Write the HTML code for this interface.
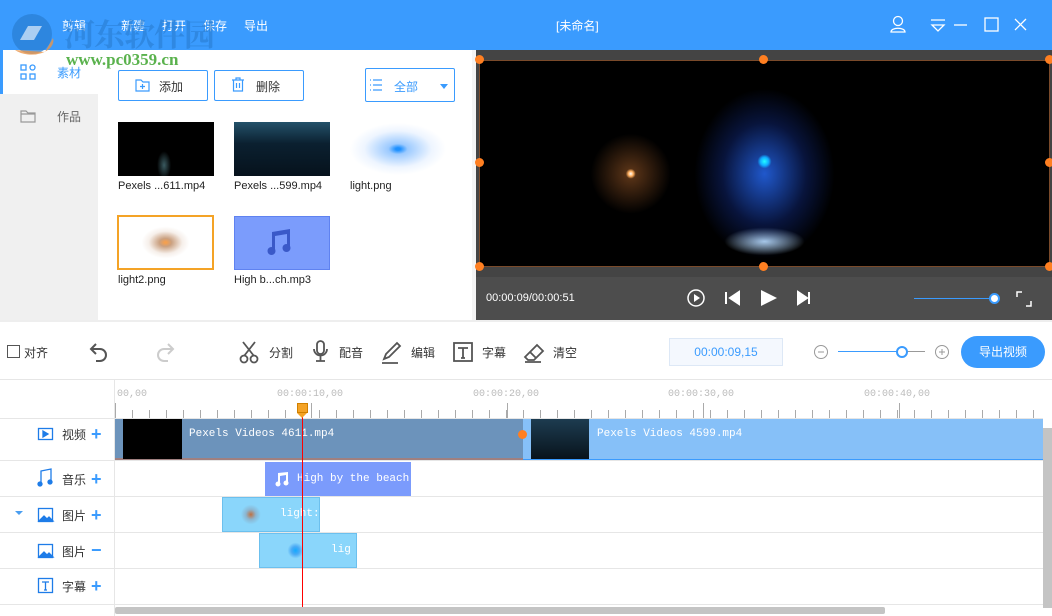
<!DOCTYPE html>
<html><head><meta charset="utf-8"><style>
*{margin:0;padding:0;box-sizing:border-box}
body{width:1052px;height:616px;overflow:hidden;background:#fff;font-family:"Liberation Sans","Noto Sans CJK SC",sans-serif;font-size:12px;color:#333;position:relative}
.a{position:absolute}
.tb{left:0;top:0;width:1052px;height:50px;background:#3a9bfe}
.wt{color:#fff;font-size:12px;top:17px}
.btn{border:1px solid #3a9bfe;border-radius:2px;height:31px;background:#fff;color:#333;font-size:12px}
.th{font-size:11px;color:#222}
.tl{font-size:12px;color:#333}
.plus{color:#3a9bfe;font-size:18px;font-weight:bold}
.mono{font-family:"Liberation Mono","Noto Sans CJK SC",monospace;color:#fff;font-size:11px}
.dot{width:9px;height:9px;border-radius:50%;background:#ff7f21}
</style></head><body>
<div class="a tb"></div>
<div class="a wt" style="left:62px">剪辑</div>
<div class="a wt" style="left:121px">新建</div>
<div class="a wt" style="left:162px">打开</div>
<div class="a wt" style="left:203px">保存</div>
<div class="a wt" style="left:244px">导出</div>
<div class="a wt" style="left:556px">[未命名]</div>
<svg class="a" style="left:885px;top:14px" width="150" height="22" fill="none" stroke="#fff" stroke-width="1.3">
<circle cx="13" cy="7" r="4.5"/><path d="M6 18c0-5 14-5 14 0z"/>
<path d="M46 6h14M47 11h12l-6 6z"/>
<path d="M69 11h13"/><rect x="100" y="4" width="13" height="13"/><path d="M130 5l11 11M141 5l-11 11"/>
</svg>
<!-- sidebar -->
<div class="a" style="left:0;top:50px;width:98px;height:270px;background:#f0f0f0"></div>
<div class="a" style="left:0;top:50px;width:98px;height:44px;background:#fff"></div>
<div class="a" style="left:0;top:50px;width:3px;height:44px;background:#3a9bfe"></div>
<svg class="a" style="left:20px;top:64px" width="16" height="16" fill="none" stroke="#3a9bfe" stroke-width="1.3"><rect x="1" y="1" width="5" height="5"/><rect x="10" y="1" width="5" height="5" rx="2.5"/><rect x="1" y="10" width="5" height="5"/><rect x="10" y="10" width="5" height="5"/></svg>
<div class="a" style="left:57px;top:64px;color:#3a9bfe">素材</div>
<svg class="a" style="left:20px;top:109px" width="16" height="14" fill="none" stroke="#999" stroke-width="1.2"><path d="M1 2h5l2 2h7v9H1z M1 5h14"/></svg>
<div class="a" style="left:57px;top:108px;color:#666">作品</div>
<!-- media -->
<div class="a btn" style="left:118px;top:70px;width:90px"></div>
<svg class="a" style="left:135px;top:78px" width="15" height="14" fill="none" stroke="#3a9bfe" stroke-width="1.2"><path d="M1 2h5l2 2h6v9H1z M7.5 6v5M5 8.5h5"/></svg>
<div class="a" style="left:159px;top:78px">添加</div>
<div class="a btn" style="left:214px;top:70px;width:90px"></div>
<svg class="a" style="left:231px;top:77px" width="14" height="15" fill="none" stroke="#3a9bfe" stroke-width="1.2"><path d="M1 3h12M5 3V1h4v2M2.5 3v11h9V3M5.5 6v5M8.5 6v5"/></svg>
<div class="a" style="left:256px;top:78px">删除</div>
<div class="a btn" style="left:365px;top:68px;width:90px;height:34px"></div>
<svg class="a" style="left:369px;top:79px" width="14" height="12" stroke="#3a9bfe" stroke-width="1.2"><path d="M1 1h1M4 1h9M1 6h1M4 6h9M1 11h1M4 11h9"/></svg>
<div class="a" style="left:394px;top:78px;color:#3a9bfe">全部</div>
<div class="a" style="left:440px;top:84px;border:4px solid transparent;border-top:5px solid #3a9bfe"></div>
<div class="a" style="left:118px;top:122px;width:96px;height:54px;background:radial-gradient(ellipse 10px 20px at 48% 80%,#3a5a60,#000 70%)"></div>
<div class="a" style="left:234px;top:122px;width:96px;height:54px;background:linear-gradient(#24526a,#0b2030 40%,#06121c)"></div>
<div class="a" style="left:350px;top:122px;width:96px;height:54px;background:radial-gradient(ellipse 48px 26px at 50% 50%,#1e90ff 5%,#9ccaff 20%,#eef5ff 70%,#fff)"></div>
<div class="a th" style="left:118px;top:180px">Pexels ...611.mp4</div>
<div class="a th" style="left:234px;top:180px">Pexels ...599.mp4</div>
<div class="a th" style="left:350px;top:180px">light.png</div>
<div class="a" style="left:117px;top:215px;width:97px;height:55px;border:2px solid #f4a326;background:radial-gradient(ellipse 24px 16px at 50% 50%,#f4a050 5%,#caa080 25%,#f6efea 70%,#fff)"></div>
<div class="a" style="left:234px;top:216px;width:96px;height:54px;background:#7b9cfc;border:1px solid #5f82f0"></div>
<svg class="a" style="left:264px;top:226px" width="34" height="32" fill="#3a59c8"><path d="M8 6l18-3v19h-3V8L11 10v15h-3z"/><circle cx="7.5" cy="25" r="4"/><circle cx="22.5" cy="22" r="4"/></svg>
<div class="a th" style="left:118px;top:274px">light2.png</div>
<div class="a th" style="left:234px;top:274px">High b...ch.mp3</div>
<div class="a" style="left:472px;top:50px;width:4px;height:270px;background:#f4f4f4"></div>
<!-- preview -->
<div class="a" style="left:476px;top:50px;width:576px;height:270px;background:#444"></div>
<div class="a" style="left:479px;top:60px;width:571px;height:207px;background:radial-gradient(circle 5px at 26.5% 55%,#fff,#ffb060 50%,transparent),radial-gradient(circle 40px at 26.5% 55%,rgba(190,110,50,.5),transparent),radial-gradient(circle 7px at 50% 49%,#2ff,#1af 60%,transparent),radial-gradient(ellipse 70px 85px at 50% 55%,rgba(40,110,255,.8),rgba(20,50,150,.4) 60%,transparent),radial-gradient(ellipse 40px 14px at 50% 88%,#cef,transparent);background-color:#000;border:1px solid #7a4a2a"></div>
<div class="a dot" style="left:475px;top:55px"></div><div class="a dot" style="left:759px;top:55px"></div><div class="a dot" style="left:1045px;top:55px"></div>
<div class="a dot" style="left:475px;top:158px"></div><div class="a dot" style="left:1045px;top:158px"></div>
<div class="a dot" style="left:475px;top:262px"></div><div class="a dot" style="left:759px;top:262px"></div><div class="a dot" style="left:1045px;top:262px"></div>
<div class="a" style="left:476px;top:277px;width:576px;height:43px;background:#4d4d4d"></div>
<div class="a" style="left:486px;top:292px;color:#fff;font-size:11px">00:00:09/00:00:51</div>
<svg class="a" style="left:684px;top:287px" width="140" height="22" fill="#fff" stroke="#fff">
<circle cx="12" cy="11" r="8" fill="none" stroke-width="1.5"/><path d="M10 7l6 4-6 4z" stroke="none"/>
<path d="M42 5v12M55 5l-9 6 9 6z" stroke-width="2"/>
<path d="M77 3l16 8-16 8z" stroke="none"/>
<path d="M114 5l9 6-9 6zM125 5v12" stroke-width="2"/>
</svg>
<div class="a" style="left:914px;top:298px;width:80px;height:1px;background:#3a9bfe"></div>
<div class="a" style="left:989px;top:293px;width:11px;height:11px;border-radius:50%;background:#fff;border:2px solid #3a9bfe"></div>
<svg class="a" style="left:1016px;top:291px" width="16" height="16" fill="none" stroke="#fff" stroke-width="1.5"><path d="M1 6V1h5M15 10v5h-5"/></svg>
<!-- toolbar -->
<div class="a" style="left:0;top:320px;width:1052px;height:60px;background:#fff;border-top:2px solid #eee;border-bottom:1px solid #e6e6e6"></div>
<div class="a" style="left:7px;top:345px;width:13px;height:13px;border:1px solid #555"></div>
<div class="a tl" style="left:24px;top:344px">对齐</div>
<svg class="a" style="left:88px;top:340px" width="90" height="24" fill="none" stroke-width="2"><path d="M8 4L3 9l5 5M3 9h9a6 6 0 0 1 0 12H8" stroke="#555"/><path d="M80 4l5 5-5 5M85 9h-9a6 6 0 0 0 0 12h4" stroke="#ccc"/></svg>
<svg class="a" style="left:238px;top:340px" width="330" height="24" fill="none" stroke="#555" stroke-width="1.8">
<path d="M5 2l11 14M17 2L6 16"/><circle cx="6" cy="19" r="3.5"/><circle cx="16" cy="19" r="3.5"/>
<rect x="79" y="1" width="7" height="13" rx="3.5"/><path d="M76 9a6.5 6.5 0 0 0 13 0M82.5 16v5M78 21h9"/>
<path d="M146 19l2-5 11-11 3 3-11 11z M144 23h16"/>
<rect x="216" y="3" width="18" height="18"/><path d="M220 8h10M225 8v10M223 18h4"/>
<path d="M287 17l12-12 6 6-9 9h-6zM292 12l6 6M287 22h16"/>
</svg>
<div class="a tl" style="left:269px;top:344px">分割</div>
<div class="a tl" style="left:339px;top:344px">配音</div>
<div class="a tl" style="left:411px;top:344px">编辑</div>
<div class="a tl" style="left:482px;top:344px">字幕</div>
<div class="a tl" style="left:553px;top:344px">清空</div>
<div class="a" style="left:669px;top:338px;width:114px;height:28px;background:#f4f8fe;border:1px solid #dde8f6;color:#3a9bfe;text-align:center;line-height:26px">00:00:09,15</div>
<svg class="a" style="left:812px;top:343px" width="140" height="18" fill="none" stroke="#999" stroke-width="1"><circle cx="9" cy="9" r="6.5"/><path d="M6 9h6"/><circle cx="130" cy="9" r="6.5"/><path d="M127 9h6M130 6v6"/></svg>
<div class="a" style="left:838px;top:351px;width:65px;height:1px;background:#3a9bfe"></div>
<div class="a" style="left:903px;top:351px;width:22px;height:1px;background:#999"></div>
<div class="a" style="left:896px;top:346px;width:12px;height:12px;border-radius:50%;background:#fff;border:2px solid #3a9bfe"></div>
<div class="a" style="left:961px;top:336px;width:84px;height:32px;border-radius:16px;background:#3a9bfe;color:#fff;text-align:center;line-height:32px;font-size:12px">导出视频</div>
<!-- timeline -->
<div class="a" style="left:114px;top:380px;width:1px;height:236px;background:#e6e6e6"></div>
<div class="a" style="left:0;top:418px;width:1043px;height:1px;background:#e6e6e6"></div>
<div class="a" style="left:0;top:460px;width:1043px;height:1px;background:#e6e6e6"></div>
<div class="a" style="left:0;top:496px;width:1043px;height:1px;background:#e6e6e6"></div>
<div class="a" style="left:0;top:532px;width:1043px;height:1px;background:#e6e6e6"></div>
<div class="a" style="left:0;top:568px;width:1043px;height:1px;background:#e6e6e6"></div>
<div class="a" style="left:0;top:604px;width:1043px;height:1px;background:#e6e6e6"></div>
<div class="a" style="left:115px;top:410px;width:928px;height:8px;background:repeating-linear-gradient(90deg,#aaa 0 1px,transparent 1px 17px)"></div>
<div class="a" style="left:115px;top:403px;width:928px;height:15px;background:repeating-linear-gradient(90deg,#aaa 0 1px,transparent 1px 196px)"></div>
<div class="a" style="left:117px;top:389px;color:#bbb;font-size:10px;font-family:'Liberation Mono',monospace">00,00</div>
<div class="a" style="left:277px;top:389px;color:#bbb;font-size:10px;font-family:'Liberation Mono',monospace">00:00:10,00</div>
<div class="a" style="left:473px;top:389px;color:#bbb;font-size:10px;font-family:'Liberation Mono',monospace">00:00:20,00</div>
<div class="a" style="left:668px;top:389px;color:#bbb;font-size:10px;font-family:'Liberation Mono',monospace">00:00:30,00</div>
<div class="a" style="left:864px;top:389px;color:#bbb;font-size:10px;font-family:'Liberation Mono',monospace">00:00:40,00</div>
<!-- track headers -->
<svg class="a" style="left:14px;top:424px" width="90" height="175" fill="none" stroke="#1e7ce8" stroke-width="1.3">
<rect x="24.5" y="4.5" width="14" height="11"/><path d="M29 7l5 3-5 3z" fill="#1e7ce8"/>
<path d="M27 60V47l10-2v12" /><circle cx="26" cy="60" r="2" fill="#1e7ce8"/><circle cx="36" cy="58" r="2" fill="#1e7ce8"/>
<path d="M1 87h8l-4 4z" fill="#4a9ef0" stroke="none"/>
<rect x="24.5" y="84.5" width="14" height="13"/><path d="M25 97l5-5 3 3 2-2 4 4z" fill="#1e7ce8"/>
<rect x="24.5" y="120.5" width="14" height="13"/><path d="M25 133l5-5 3 3 2-2 4 4z" fill="#1e7ce8"/>
<rect x="24.5" y="154.5" width="14" height="14"/><path d="M28 158h7M31.5 158v8M30 166h3"/>
</svg>
<div class="a tl" style="left:62px;top:426px">视频</div><div class="a plus" style="left:91px;top:424px">+</div>
<div class="a tl" style="left:62px;top:471px">音乐</div><div class="a plus" style="left:91px;top:469px">+</div>
<div class="a tl" style="left:62px;top:507px">图片</div><div class="a plus" style="left:91px;top:505px">+</div>
<div class="a tl" style="left:62px;top:543px">图片</div><div class="a plus" style="left:91px;top:540px">−</div>
<div class="a tl" style="left:62px;top:578px">字幕</div><div class="a plus" style="left:91px;top:576px">+</div>
<!-- clips -->
<div class="a" style="left:115px;top:419px;width:408px;height:41px;background:#6c93bb;border-bottom:2px solid #a08080"></div>
<div class="a" style="left:123px;top:419px;width:59px;height:40px;background:#000"></div>
<div class="a mono" style="left:189px;top:428px">Pexels Videos 4611.mp4</div>
<div class="a" style="left:523px;top:419px;width:520px;height:41px;background:#86c0f8;border-bottom:1px solid #3a9bfe"></div>
<div class="a" style="left:531px;top:419px;width:58px;height:40px;background:linear-gradient(#1d3c50,#08131c)"></div>
<div class="a mono" style="left:597px;top:428px">Pexels Videos 4599.mp4</div>
<div class="a dot" style="left:518px;top:430px"></div>
<div class="a" style="left:265px;top:462px;width:146px;height:34px;background:#7b9bfc"></div>
<svg class="a" style="left:274px;top:471px" width="16" height="16" fill="#fff"><path d="M4 2l10-1v11h-2V4L6 5v9H4z"/><circle cx="4" cy="13" r="2.5"/><circle cx="12" cy="12" r="2.5"/></svg>
<div class="a mono" style="left:297px;top:473px">High by the beach.</div>
<div class="a" style="left:222px;top:497px;width:98px;height:35px;background:radial-gradient(circle 10px at 29% 50%,#c07040,rgba(140,160,180,.6) 50%,transparent),#8ad6fb;border:1px solid #6cc0ee"></div>
<div class="a mono" style="left:280px;top:508px">light:</div>
<div class="a" style="left:259px;top:533px;width:98px;height:35px;background:radial-gradient(circle 8px at 37% 50%,#1af,#4aaaf5 50%,transparent),#8ad6fb;border:1px solid #6cc0ee"></div>
<div class="a mono" style="left:331px;top:544px">lig</div>
<div class="a" style="left:302px;top:405px;width:1px;height:202px;background:#f00"></div>
<div class="a" style="left:297px;top:403px;width:11px;height:10px;background:#f4a326;border:1px solid #d08000"></div>
<div class="a" style="left:297px;top:413px;border-left:5.5px solid transparent;border-right:5.5px solid transparent;border-top:5px solid #f4a326"></div>
<div class="a" style="left:115px;top:607px;width:770px;height:7px;background:#c4c4c4;border-radius:2px"></div>
<div class="a" style="left:1043px;top:428px;width:9px;height:180px;background:#c4c4c4"></div>
<!-- watermark on top -->
<svg class="a" style="left:5px;top:10px" width="60" height="50"><circle cx="27" cy="24" r="20" fill="#2a7fd4" fill-opacity=".75"/><path d="M10 40a22 14 0 0 0 38-12l-8 14z" fill="#e9954a" fill-opacity=".8"/><path d="M15 30l8-14h14l-8 14z" fill="#fff" fill-opacity=".6"/></svg>
<div class="a" style="left:64px;top:10px;font-size:31px;font-weight:bold;color:#2a7fd4;opacity:.65;font-family:'Noto Serif CJK SC',serif;letter-spacing:-1px">河东软件园</div>
<div class="a" style="left:66px;top:50px;font-size:17px;font-weight:bold;color:#5ab24d;font-family:'Liberation Serif',serif">www.pc0359.cn</div>
</body></html>
